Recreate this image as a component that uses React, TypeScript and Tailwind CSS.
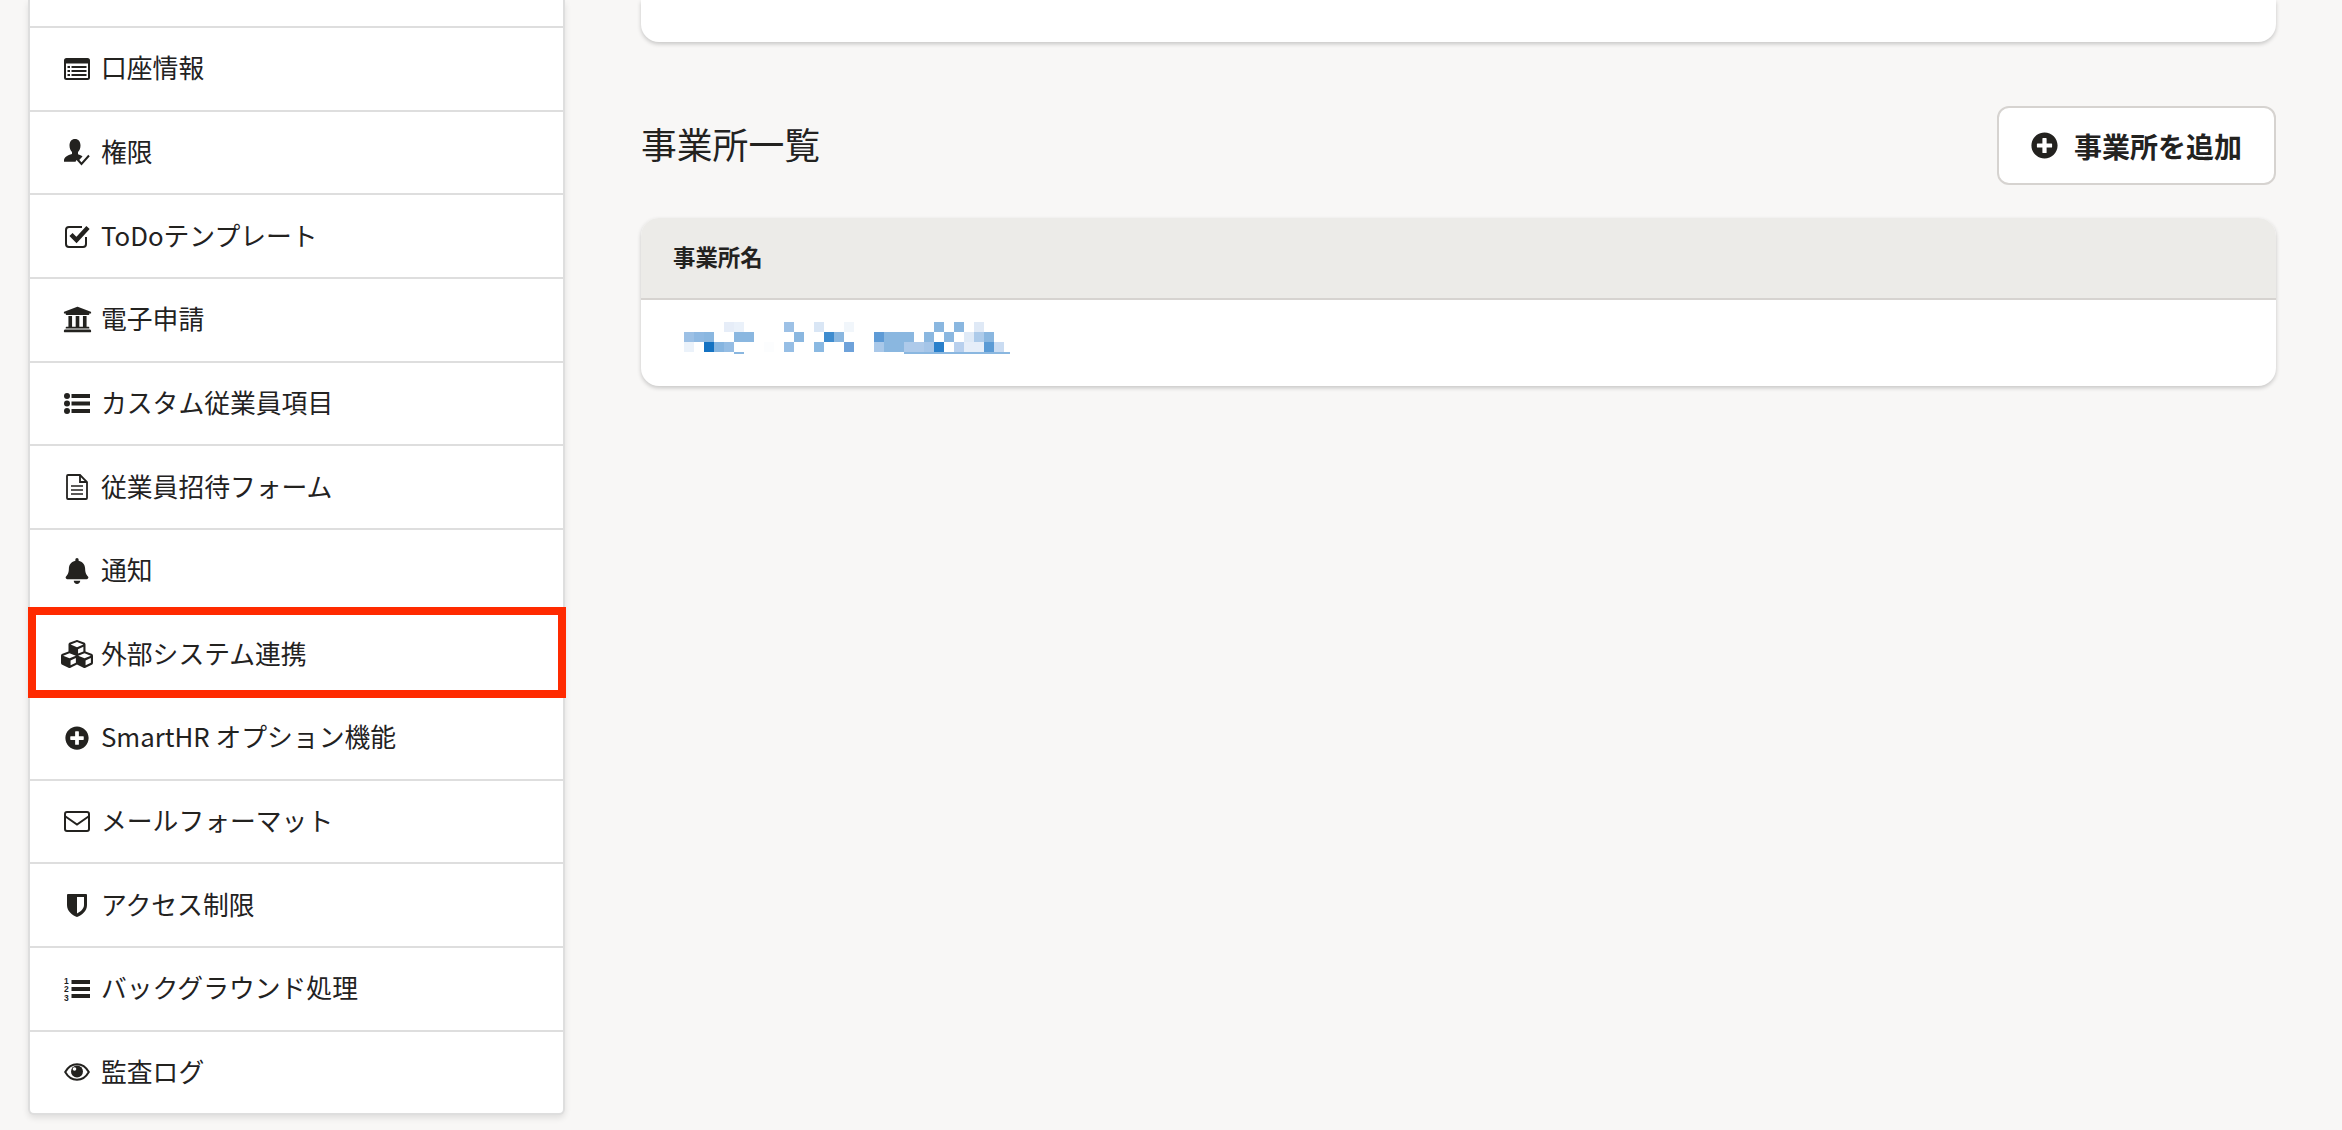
import type { ReactNode } from "react";
import { FaBell, FaCubes, FaPlusCircle, FaUniversity } from "react-icons/fa";

const ink = "#23221f";

function ListAltIcon() {
  return (
    <svg width="26" height="22" viewBox="0 0 26 22" fill={ink}>
      <path
        fillRule="evenodd"
        d="M2.500 0h21A2.500 2.500 0 0 1 26 2.500v17a2.500 2.500 0 0 1-2.500 2.500h-21A2.500 2.500 0 0 1 0 19.500v-17A2.500 2.500 0 0 1 2.500 0zM2 5.500v14a.5.500 0 0 0 .5.500h21a.5.500 0 0 0 .5-.500v-14z"
      />
      <rect x="3.500" y="8" width="2.500" height="2" />
      <rect x="3.500" y="12" width="2.500" height="2" />
      <rect x="3.500" y="16" width="2.500" height="2" />
      <rect x="7.500" y="8" width="15" height="2" />
      <rect x="7.500" y="12" width="15" height="2" />
      <rect x="7.500" y="16" width="15" height="2" />
    </svg>
  );
}

function UserCheckIcon() {
  return (
    <svg width="26" height="27" viewBox="0 0 26 27" fill="none">
      <path
        fill={ink}
        d="M11 0c3.400 0 5.500 2.700 5.500 6.500 0 2.700-1 5-2.500 6.500v2.300c1.800.5 3.400 1.300 4.500 2.200l-4.500 4.700-1.500-1.200-1 1.800H0v-1.500c0-3 3.500-5 8-6.300V13c-1.500-1.500-2.500-3.800-2.500-6.500C5.500 2.700 7.600 0 11 0z"
      />
      <path stroke={ink} strokeWidth="2" d="M14 21l3.500 4L25 16.500" />
    </svg>
  );
}

function CheckSquareIcon() {
  return (
    <svg width="25" height="24" viewBox="0 0 25 24" fill="none">
      <path
        stroke={ink}
        strokeWidth="2"
        d="M21 13v7a3 3 0 0 1-3 3H4a3 3 0 0 1-3-3V6a3 3 0 0 1 3-3h13"
      />
      <path stroke={ink} strokeWidth="4.500" d="M6 10.500l5.500 5.500L23 3.500" />
    </svg>
  );
}

function ListUlIcon() {
  return (
    <svg width="26" height="21" viewBox="0 0 26 21" fill={ink}>
      <circle cx="3" cy="3" r="3" />
      <circle cx="3" cy="10.500" r="3" />
      <circle cx="3" cy="18" r="3" />
      <rect x="7.500" y="1" width="18.500" height="4" />
      <rect x="7.500" y="8.500" width="18.500" height="4" />
      <rect x="7.500" y="16" width="18.500" height="4" />
    </svg>
  );
}

function FileIcon() {
  return (
    <svg width="22" height="26" viewBox="0 0 22 26" fill="none" stroke={ink} strokeWidth="1.800">
      <path d="M2 1h12l7 7v16a1 1 0 0 1-1 1H2a1 1 0 0 1-1-1V2a1 1 0 0 1 1-1z" />
      <path d="M14 1v7h7" />
      <path d="M5 12h12M5 16h12M5 20h12" strokeWidth="1.600" />
    </svg>
  );
}

function EnvelopeIcon() {
  return (
    <svg width="26" height="21" viewBox="0 0 26 21" fill="none" stroke={ink} strokeWidth="2">
      <rect x="1" y="1" width="24" height="19" rx="2" />
      <path d="M1.500 5.500L13 13.500l11.500-8" />
    </svg>
  );
}

function ShieldIcon() {
  return (
    <svg width="20" height="23" viewBox="0 0 20 23">
      <path
        fill={ink}
        fillRule="evenodd"
        d="M1 0h18a1 1 0 0 1 1 1v10c0 6-5 10-10 12C5 21 0 17 0 11V1a1 1 0 0 1 1-1zm9 3v16.500c3-1.500 7-4.500 7-8.500V3z"
      />
    </svg>
  );
}

function ListOlIcon() {
  return (
    <svg width="26" height="26" viewBox="0 0 26 26" fill={ink}>
      <text x="0" y="7.500" fontSize="8.500" fontWeight="700" fontFamily="Liberation Sans, sans-serif">1</text>
      <text x="0" y="16" fontSize="8.500" fontWeight="700" fontFamily="Liberation Sans, sans-serif">2</text>
      <text x="0" y="24.500" fontSize="8.500" fontWeight="700" fontFamily="Liberation Sans, sans-serif">3</text>
      <rect x="7.500" y="4" width="18.500" height="4" />
      <rect x="7.500" y="11" width="18.500" height="4" />
      <rect x="7.500" y="18" width="18.500" height="4" />
    </svg>
  );
}

function EyeIcon() {
  return (
    <svg width="26" height="18" viewBox="0 0 26 18" fill="none">
      <path stroke={ink} strokeWidth="2" d="M1.200 9C4 4 8 1.200 13 1.200S22 4 24.800 9C22 14 18 16.800 13 16.800S4 14 1.200 9z" />
      <circle cx="13" cy="8.500" r="6" fill={ink} />
      <circle cx="10.500" cy="6" r="1.800" fill="#fff" />
    </svg>
  );
}

const menuItems: { label: string; icon: ReactNode; active?: boolean }[] = [
  { label: "口座情報", icon: <ListAltIcon /> },
  { label: "権限", icon: <UserCheckIcon /> },
  { label: "ToDoテンプレート", icon: <CheckSquareIcon /> },
  { label: "電子申請", icon: <FaUniversity size={29} /> },
  { label: "カスタム従業員項目", icon: <ListUlIcon /> },
  { label: "従業員招待フォーム", icon: <FileIcon /> },
  { label: "通知", icon: <FaBell size={26} /> },
  { label: "外部システム連携", icon: <FaCubes size={32} />, active: true },
  { label: "SmartHR オプション機能", icon: <FaPlusCircle size={24} /> },
  { label: "メールフォーマット", icon: <EnvelopeIcon /> },
  { label: "アクセス制限", icon: <ShieldIcon /> },
  { label: "バックグラウンド処理", icon: <ListOlIcon /> },
  { label: "監査ログ", icon: <EyeIcon /> },
];

// redacted office name: [column, row, colour]
const mosaic: [number, number, string][] = [
  [4, 0, "#e6edf8"], [5, 0, "#eaf1fa"], [10, 0, "#9dc1e6"], [13, 0, "#d9e6f5"], [16, 0, "#f1f6fb"],
  [25, 0, "#8ab7e0"], [27, 0, "#8ab7e0"], [29, 0, "#dfe9f6"],
  [0, 1, "#9cc0e5"], [1, 1, "#8fb9e2"], [2, 1, "#8ab7e0"], [5, 1, "#8ab7e0"], [6, 1, "#8ab7e0"],
  [11, 1, "#8ab7e0"], [14, 1, "#3e8ccf"], [15, 1, "#8ab7e0"], [19, 1, "#5e9bd6"], [20, 1, "#8ab7e0"],
  [21, 1, "#8ab7e0"], [22, 1, "#8ab7e0"], [24, 1, "#8ab7e0"], [26, 1, "#8ab7e0"], [28, 1, "#dfeaf7"],
  [29, 1, "#adcbea"], [30, 1, "#8ab7e0"],
  [0, 2, "#ebf2fa"], [2, 2, "#1472c2"], [3, 2, "#86b5e0"], [4, 2, "#95bde4"], [8, 2, "#fcfdfe"],
  [10, 2, "#96bee5"], [13, 2, "#8ab9e2"], [16, 2, "#6ea2da"], [19, 2, "#a9c8e9"], [20, 2, "#8ab7e0"],
  [21, 2, "#8ab7e0"], [22, 2, "#aecaea"], [23, 2, "#aecaea"], [24, 2, "#a5c5e8"], [25, 2, "#2a80cb"],
  [27, 2, "#b8d0ee"], [28, 2, "#e6eef9"], [29, 2, "#e6eef9"], [30, 2, "#5b9bd5"], [31, 2, "#cadcf2"],
];

function RedactedName() {
  return (
    <svg width="330" height="34" viewBox="0 0 330 34">
      {mosaic.map(([col, row, fill], i) => (
        <rect key={i} x={col * 10} y={row * 10} width="10" height="10" fill={fill} />
      ))}
      <rect x="50" y="30" width="10" height="2" fill="#8ab7e0" />
      <rect x="220" y="30" width="106" height="2" fill="#8ab7e0" />
    </svg>
  );
}

function SideMenu() {
  return (
    <div className="ml-[28px] w-[537px] shrink-0 self-start rounded-b-md border-x-2 border-b-2 border-[#dedede] bg-white shadow-[0_3px_6px_rgba(0,0,0,0.1)]">
      <div className="h-[28px] border-b-2 border-[#dedede]" />
      {menuItems.map((item, index) => (
        <div
          key={index}
          className={
            index === menuItems.length - 1
              ? "relative flex h-[81.5px] items-center pl-[27px] text-[25.8px]"
              : "relative flex h-[83.64px] items-center border-b-2 border-[#dedede] pl-[27px] text-[25.8px]"
          }
        >
          <span className="flex w-[40px] shrink-0 items-center justify-center">{item.icon}</span>
          <span className="ml-[4px] pb-[2px]">{item.label}</span>
          {item.active && (
            <div className="absolute top-[-6px] left-[-2px] h-[91px] w-[538px] border-[8px] border-[#ff2a00]" />
          )}
        </div>
      ))}
    </div>
  );
}

export default function App() {
  return (
    <div
      className="flex h-[1130px] w-[2342px] overflow-hidden bg-[#f8f7f6] text-[#23221f]"
      style={{ fontFamily: '"Noto Sans CJK JP", "Noto Sans", sans-serif' }}
    >
      <SideMenu />
      <main className="ml-[76px] w-[1635px]">
        <div className="h-[42px] rounded-b-[18px] bg-white shadow-[0_2px_4px_rgba(0,0,0,0.2)]" />

        <div className="mt-[64px] flex h-[79px] items-center justify-between">
          <h1 className="pb-[3px] text-[35.8px] font-normal">事業所一覧</h1>
          <button className="flex h-[79px] w-[279px] items-center justify-center gap-[16px] rounded-[12px] border-2 border-[#d6d3d0] bg-white text-[28px] font-bold">
            <FaPlusCircle size={27} />
            事業所を追加
          </button>
        </div>

        <div className="mt-[33px] overflow-hidden rounded-[18px] bg-white shadow-[0_2px_4px_rgba(0,0,0,0.2)]">
          <div className="flex h-[82px] items-center border-b-2 border-[#d6d3d0] bg-[#ecebe8] pb-[2px] pl-[32px] text-[22.4px] font-bold">
            事業所名
          </div>
          <div className="flex h-[86px] items-start pt-[22px] pl-[43px]">
            <RedactedName />
          </div>
        </div>
      </main>
    </div>
  );
}
